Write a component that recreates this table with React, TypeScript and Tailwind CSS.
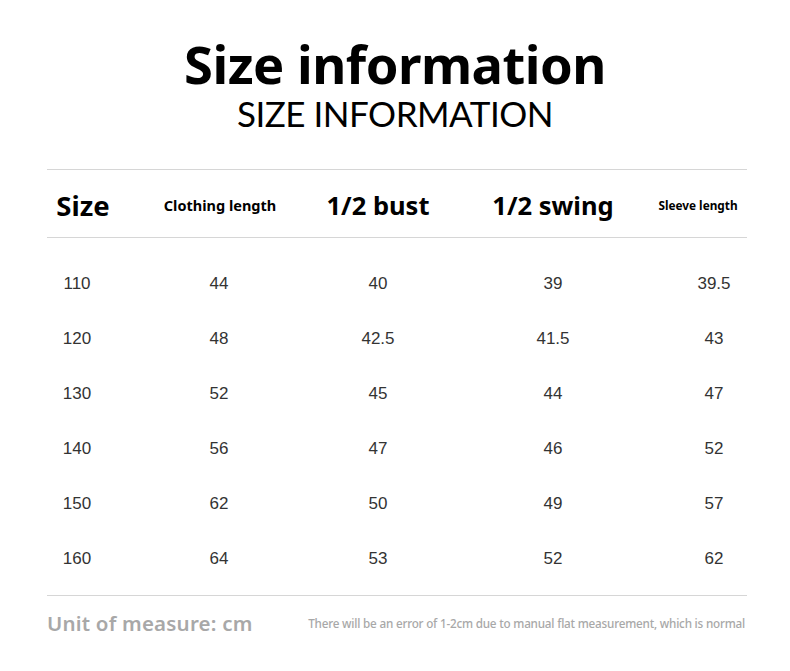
import React from "react";

const rows = [
  ["110", "44", "40", "39", "39.5"],
  ["120", "48", "42.5", "41.5", "43"],
  ["130", "52", "45", "44", "47"],
  ["140", "56", "47", "46", "52"],
  ["150", "62", "50", "49", "57"],
  ["160", "64", "53", "52", "62"],
];

const App: React.FC = () => {
  return (
    <div className="w-[790px] h-[671px] bg-white flex flex-col items-center font-['Noto_Sans',sans-serif] text-black">
      {/* Title */}
      <h1 className="mt-[35px] text-[52.5px] leading-[58px] font-bold tracking-[-0.5px]">
        Size information
      </h1>
      <h2 className="mt-[0px] text-[35px] leading-[40px] font-['Lato',sans-serif] font-normal tracking-[-0.5px]">
        SIZE INFORMATION
      </h2>

      {/* Table */}
      <div className="mt-[36px] self-start ml-[47px] w-[700px] border-t border-[#d6d6d6]">
        <div className="h-[68px] pt-[4px] grid grid-cols-[72px_202px_114px_236px_54px] items-center border-b border-[#d6d6d6] font-bold">
          <div className="flex justify-center text-[27.5px] whitespace-nowrap">Size</div>
          <div className="flex justify-center text-[14.5px] whitespace-nowrap">Clothing length</div>
          <div className="flex justify-center text-[25.5px] whitespace-nowrap">1/2 bust</div>
          <div className="flex justify-center text-[25.5px] whitespace-nowrap">1/2 swing</div>
          <div className="flex justify-center text-[11.8px] whitespace-nowrap">Sleeve length</div>
        </div>

        <div className="pt-[18px] pb-[9px] font-['Liberation_Sans',sans-serif] text-[17px] text-[#333]">
          {rows.map((r) => (
            <div
              key={r[0]}
              className="h-[55px] grid grid-cols-[60px_224px_94px_256px_66px] items-center"
            >
              {r.map((v, i) => (
                <div key={i} className="flex justify-center whitespace-nowrap">
                  {v}
                </div>
              ))}
            </div>
          ))}
        </div>

        {/* Footer */}
        <div className="border-t border-[#d6d6d6] pt-[12px] flex items-center justify-between">
          <span className="text-[20.5px] font-semibold text-[#a8a8a8] tracking-[0.2px]">
            Unit of measure: cm
          </span>
          <span className="text-[11.7px] font-medium text-[#a8a8a8] tracking-[-0.2px] mr-[2px]">
            There will be an error of 1-2cm due to manual flat measurement, which is normal
          </span>
        </div>
      </div>
    </div>
  );
};

export default App;
